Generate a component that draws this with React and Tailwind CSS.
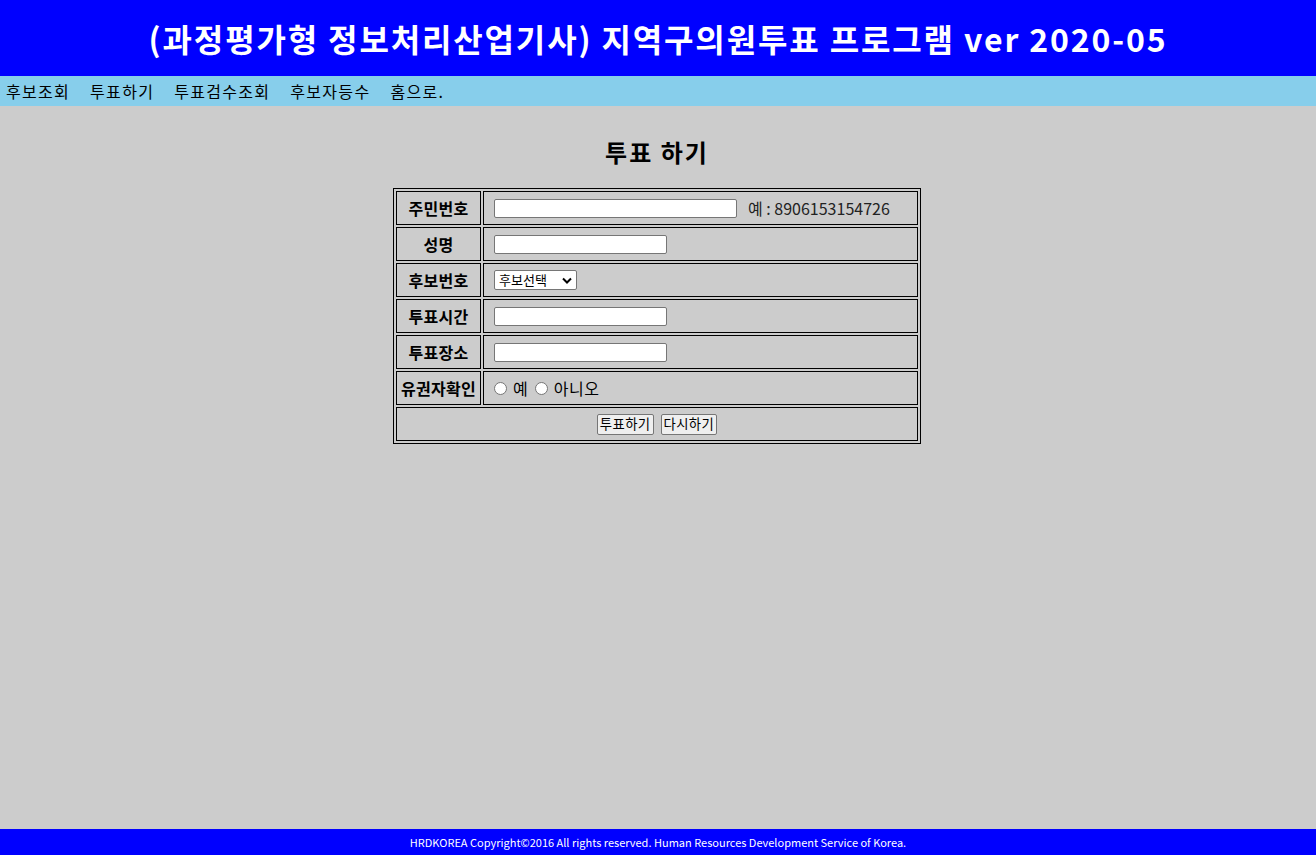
import React from "react";

const font = { fontFamily: '"Noto Sans CJK KR", "Noto Sans", sans-serif' };

function Label({ children }) {
  return (
    <td className="border border-black h-[34px] w-[85px] p-0 text-center font-bold text-[16px] whitespace-nowrap tracking-[0.3px]">
      {children}
    </td>
  );
}

function Field({ children }) {
  return (
    <td className="border border-black h-[34px] p-0 pl-[10px] text-[16px] whitespace-nowrap">
      <div className="flex items-center">{children}</div>
    </td>
  );
}

function TextInput({ w }) {
  return (
    <input
      type="text"
      className={`${w} h-[19px] bg-white border border-[#767676] rounded-[2px] px-[2px] text-[13px]`}
    />
  );
}

function Radio() {
  return (
    <span className="inline-block w-[13px] h-[13px] rounded-full border border-[#767676] bg-white mr-[6px]" />
  );
}

export default function App() {
  return (
    <div className="min-h-screen flex flex-col bg-[#cccccc] text-black" style={font}>
      <header className="h-[76px] bg-[#0000ff] flex items-center justify-center">
        <h1 className="text-white font-bold text-[32px] tracking-[1.85px]">
          (과정평가형 정보처리산업기사) 지역구의원투표 프로그램 ver 2020-05
        </h1>
      </header>
      <nav className="h-[30px] bg-[#87ceeb] flex items-center pl-[6px] gap-[20px] text-[16px] tracking-[1.3px]">
        <span>후보조회</span>
        <span>투표하기</span>
        <span>투표검수조회</span>
        <span>후보자등수</span>
        <span>홈으로.</span>
      </nav>
      <main className="flex-1 flex flex-col items-center">
        <h2 className="mt-[28px] mb-[18px] text-[24px] font-bold leading-[36px] tracking-[2px] mr-[2px]">투표 하기</h2>
        <table className="border border-black border-separate border-spacing-[2px] w-[528px] mr-[2px]">
          <tbody>
            <tr>
              <Label>주민번호</Label>
              <Field>
                <TextInput w="w-[243px]" />
                <span className="ml-[11px] text-[#222]">예 : 8906153154726</span>
              </Field>
            </tr>
            <tr>
              <Label>성명</Label>
              <Field>
                <TextInput w="w-[173px]" />
              </Field>
            </tr>
            <tr>
              <Label>후보번호</Label>
              <Field>
                <div className="w-[83px] h-[20px] bg-white border border-[#767676] rounded-[2px] flex items-center justify-between pl-[4px] pr-[4px] text-[13px]">
                  <span>후보선택</span>
                  <svg width="10" height="7" viewBox="0 0 10 7">
                    <path d="M1 1.5 L5 5.5 L9 1.5" fill="none" stroke="black" strokeWidth="2" />
                  </svg>
                </div>
              </Field>
            </tr>
            <tr>
              <Label>투표시간</Label>
              <Field>
                <TextInput w="w-[173px]" />
              </Field>
            </tr>
            <tr>
              <Label>투표장소</Label>
              <Field>
                <TextInput w="w-[173px]" />
              </Field>
            </tr>
            <tr>
              <Label>유권자확인</Label>
              <Field>
                <Radio />
                <span className="mr-[7px]">예</span>
                <Radio />
                <span className="tracking-[0.5px]">아니오</span>
              </Field>
            </tr>
            <tr>
              <td colSpan={2} className="border border-black h-[34px] p-0">
                <div className="flex items-center justify-center gap-[7px]">
                  <button className="h-[21px] px-[2px] bg-[#efefef] border border-[#767676] rounded-[2px] text-[13.33px] leading-none tracking-[0.4px]">
                    투표하기
                  </button>
                  <button className="h-[21px] px-[2px] bg-[#efefef] border border-[#767676] rounded-[2px] text-[13.33px] leading-none tracking-[0.4px]">
                    다시하기
                  </button>
                </div>
              </td>
            </tr>
          </tbody>
        </table>
      </main>
      <footer className="h-[26px] bg-[#0000ff] flex items-center justify-center text-white text-[11px]">
        HRDKOREA Copyright©2016 All rights reserved. Human Resources Development Service of Korea.
      </footer>
    </div>
  );
}
